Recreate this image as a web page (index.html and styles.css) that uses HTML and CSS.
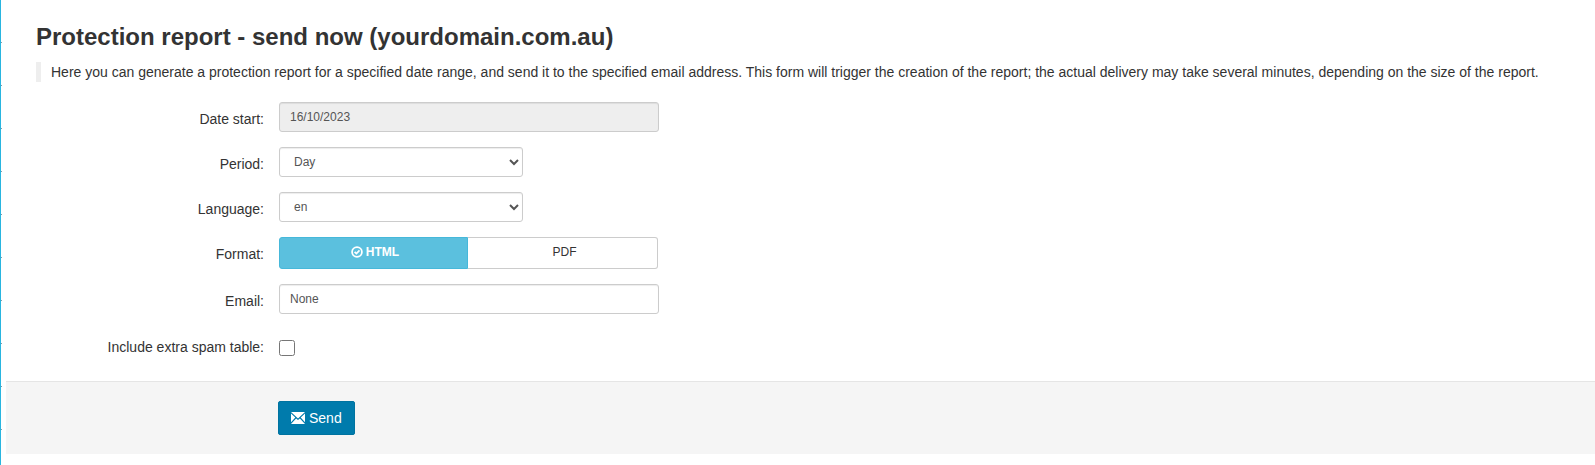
FILE: index.html
```html
<!DOCTYPE html>
<html lang="en">
<head>
    <meta charset="UTF-8">
    <meta name="viewport" content="width=device-width, initial-scale=1.0">
    <title>Protection report</title>
    <link rel="stylesheet" href="styles.css">
</head>
<body>
    <div class="edge"></div>
    <div class="page">
        <div class="content">
            <h2>Protection report - send now (yourdomain.com.au)</h2>
            <p class="note">Here you can generate a protection report for a specified date range, and send it to the specified email address. This form will trigger the creation of the report; the actual delivery may take several minutes, depending on the size of the report.</p>
        </div>

        <form class="report-form">
            <div class="form-group">
                <label for="date-start">Date start:</label>
                <input class="field wide" id="date-start" type="text" value="16/10/2023" disabled>
            </div>
            <div class="form-group">
                <label for="period">Period:</label>
                <select class="field narrow" id="period">
                    <option>Day</option>
                    <option>Week</option>
                    <option>Month</option>
                </select>
            </div>
            <div class="form-group">
                <label for="language">Language:</label>
                <select class="field narrow" id="language">
                    <option>en</option>
                </select>
            </div>
            <div class="form-group">
                <label>Format:</label>
                <div class="toggle">
                    <div class="toggle-item active">
                        <svg class="check-icon" width="12" height="12" viewBox="0 0 12 12">
                            <circle cx="6" cy="6" r="4.9" fill="none" stroke="#fff" stroke-width="1.8"/>
                            <path d="M3.6 5.8 5.4 7.6 8.5 4.4" fill="none" stroke="#fff" stroke-width="1.7"/>
                        </svg>
                        HTML
                    </div>
                    <div class="toggle-item">PDF</div>
                </div>
            </div>
            <div class="form-group">
                <label for="email">Email:</label>
                <input class="field wide" id="email" type="text" value="None">
            </div>
            <div class="form-group spam-group">
                <label for="spam">Include extra spam table:</label>
                <input class="check" id="spam" type="checkbox">
            </div>

            <div class="form-actions">
                <button type="button" class="send">
                    <svg width="14" height="12" viewBox="0 0 14 12">
                        <path d="M0 0H14L7 6.4Z M0 1.6V10.2L4.3 5.6Z M14 1.6V10.2L9.7 5.6Z M0 12 5.1 6.4 7 8.1 8.9 6.4 14 12Z" fill="#fff"/>
                    </svg>
                    Send
                </button>
            </div>
        </form>
    </div>
</body>
</html>
```

FILE: styles.css
```css
body {
    font-family: "Liberation Sans", Arial, sans-serif;
    margin: 0;
    background-color: #fff;
    color: #333;
    display: flex;
    min-height: 465px;
}

/* Thin blue strip on the left edge */
.edge {
    width: 2px;
    flex-shrink: 0;
    background-image:
        linear-gradient(to right, #29b5e0 1px, transparent 1px),
        repeating-linear-gradient(to bottom, #fff 0, #fff 42px, #8a9aa5 42px, #8a9aa5 43px);
}

.page {
    flex: 1;
    min-width: 0;
    padding-left: 4px;
}

.content {
    padding: 24px 0 0 30px;
}

h2 {
    margin: 0;
    font-size: 24px;
    line-height: 26px;
    font-weight: bold;
    color: #333;
}

.note {
    margin: 12px 0 20px;
    padding: 0 0 0 10px;
    border-left: 5px solid #eee;
    font-size: 14px;
    line-height: 20px;
    white-space: nowrap;
}

.form-group {
    display: flex;
    align-items: flex-start;
    margin-bottom: 15px;
}

label {
    width: 258px;
    flex-shrink: 0;
    margin-right: 15px;
    padding-top: 7px;
    text-align: right;
    font-size: 14px;
    line-height: 20px;
}

.field {
    box-sizing: border-box;
    height: 30px;
    padding: 5px 10px;
    border: 1px solid #ccc;
    border-radius: 3px;
    background-color: #fff;
    color: #555;
    font-family: inherit;
    font-size: 12px;
    box-shadow: inset 0 1px 1px rgba(0, 0, 0, 0.075);
}

.wide {
    width: 380px;
}

.narrow {
    width: 244px;
}

input:disabled {
    background-color: #eee;
    opacity: 1;
}

.toggle {
    display: flex;
    width: 379px;
    height: 32px;
    box-sizing: border-box;
    font-size: 12px;
}

.toggle-item {
    flex: 1;
    display: flex;
    align-items: center;
    justify-content: center;
    gap: 3px;
    padding: 0 0 2px 4px;
    border: 1px solid #ccc;
    border-left: none;
    border-radius: 0 3px 3px 0;
    color: #333;
}

.toggle-item.active {
    flex: none;
    box-sizing: border-box;
    width: 189px;
    padding-left: 3px;
    border: 1px solid #46b8da;
    border-radius: 3px 0 0 3px;
    background-color: #5bc0de;
    color: #fff;
    font-weight: bold;
}

.spam-group {
    margin-bottom: 0;
    padding-top: 7px;
    height: 31px;
}

.spam-group label {
    padding-top: 1px;
}

.check {
    width: 16px;
    height: 16px;
    margin: 4px 0 0;
}

.form-actions {
    margin-top: 14px;
    height: 53px;
    padding: 19px 0 0 272px;
    border-top: 1px solid #e5e5e5;
    background-color: #f5f5f5;
}

.send {
    display: flex;
    align-items: center;
    gap: 4px;
    height: 34px;
    width: 77px;
    padding: 0 0 0 12px;
    border: 1px solid #0073a0;
    border-radius: 2px;
    background-color: #007bac;
    color: #fff;
    font-family: inherit;
    font-size: 14px;
    cursor: pointer;
}
```
